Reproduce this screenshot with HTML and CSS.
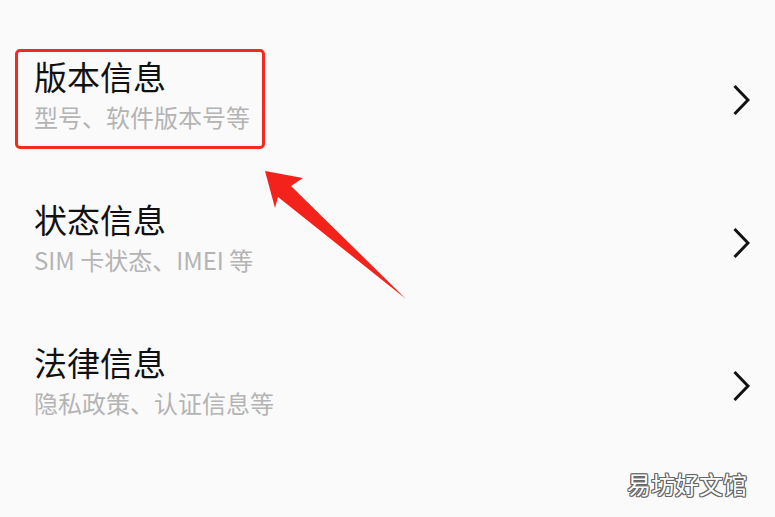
FILE: index.html
```html
<!DOCTYPE html>
<html lang="zh-CN">
<head>
<meta charset="utf-8">
<title>关于手机</title>
<link rel="stylesheet" href="styles.css">
</head>
<body>
<div class="screen">
  <ul class="list">
    <li class="row">
      <div class="text">
        <div class="title">版本信息</div>
        <div class="sub">型号、软件版本号等</div>
      </div>
      <svg class="chev" viewBox="0 0 18 32" width="18" height="32"><polyline points="2.5,2 16,16 2.5,30" fill="none" stroke="#111" stroke-width="3"/></svg>
    </li>
    <li class="row">
      <div class="text">
        <div class="title">状态信息</div>
        <div class="sub">SIM 卡状态、IMEI 等</div>
      </div>
      <svg class="chev" viewBox="0 0 18 32" width="18" height="32"><polyline points="2.5,2 16,16 2.5,30" fill="none" stroke="#111" stroke-width="3"/></svg>
    </li>
    <li class="row">
      <div class="text">
        <div class="title">法律信息</div>
        <div class="sub">隐私政策、认证信息等</div>
      </div>
      <svg class="chev" viewBox="0 0 18 32" width="18" height="32"><polyline points="2.5,2 16,16 2.5,30" fill="none" stroke="#111" stroke-width="3"/></svg>
    </li>
  </ul>
  <div class="highlight"></div>
  <svg class="arrow" viewBox="0 0 775 517" width="775" height="517"><polygon points="265,171 303,178 291,186 406,299 278,197 275,208" fill="#f3231c"/></svg>
  <div class="watermark">易坊好文馆</div>
</div>
</body>
</html>
```

FILE: styles.css
```css
html, body {
  margin: 0;
  padding: 0;
  background: #fafafa;
}
.screen {
  position: relative;
  width: 775px;
  height: 517px;
  overflow: hidden;
  font-family: "Noto Sans CJK SC", "Noto Sans", sans-serif;
}
.list {
  list-style: none;
  margin: 0;
  padding: 22px 0 0 0;
}
.row {
  height: 143px;
  display: flex;
  align-items: center;
  justify-content: space-between;
  padding: 0 25px 0 34px;
}
.text {
  display: flex;
  flex-direction: column;
  gap: 6px;
}
.title {
  font-size: 33px;
  line-height: 40px;
  color: #111;
}
.sub {
  font-size: 24px;
  line-height: 30px;
  color: #b4b4b4;
}
.chev {
  margin-top: 13px;
  display: block;
}
.highlight {
  position: absolute;
  left: 15px;
  top: 49px;
  width: 244px;
  height: 94px;
  border: 3.5px solid #f52a1f;
  border-radius: 5px;
}
.arrow {
  position: absolute;
  left: 0;
  top: 0;
}
.watermark {
  position: absolute;
  left: 627px;
  top: 468px;
  font-size: 24px;
  line-height: 32px;
  color: #fff;
  text-shadow: 1px 0 0 #666, -1px 0 0 #666, 0 1px 0 #666, 0 -1px 0 #666, 1px 1px 0 #666, -1px -1px 0 #666, 1px -1px 0 #666, -1px 1px 0 #666;
}
```
